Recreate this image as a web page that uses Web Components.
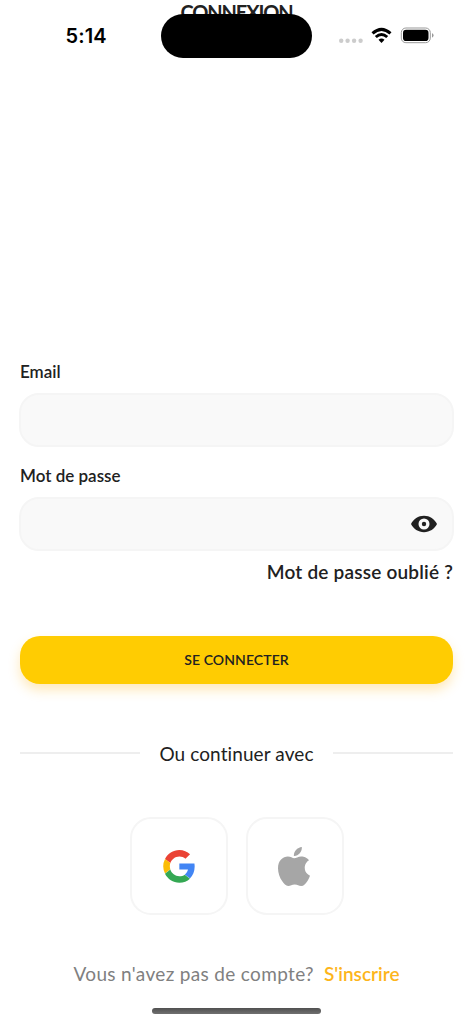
<!DOCTYPE html>
<html lang="fr">
<head>
<meta charset="utf-8">
<title>Connexion</title>
<style>
html, body { margin: 0; background: #fff; height: 1024px; overflow: hidden; }
</style>
</head>
<body>
<login-screen></login-screen>
<script>
const define = (name, html) => customElements.define(name, class extends HTMLElement {
  constructor() {
    super();
    const t = document.createElement('template');
    t.innerHTML = html;
    this.attachShadow({ mode: 'open' }).appendChild(t.content.cloneNode(true));
  }
});

define('status-bar', `
<style>
:host { display: block; position: relative; height: 72px; color: #000; }
.title { text-align: center; font: 700 20px/24px Lato, sans-serif; color: #212121; letter-spacing: -1.15px; }
.bar { position: absolute; inset: 14px 0 auto 0; height: 44px; display: grid; grid-template-columns: 161px 151px 161px; }
.time { font: 600 20px/44px Inter, sans-serif; padding-left: 65.5px; letter-spacing: 0.15px; }
.island { background: #000; border-radius: 22px; }
svg { display: block; }
.icons { padding-left: 26px; }
</style>
<div class="title">CONNEXION</div>
<div class="bar">
  <div class="time">5:14</div>
  <div class="island"></div>
  <div class="icons">
    <svg width="100" height="44" viewBox="0 0 100 44">
      <g fill="#ccc"><circle cx="3.2" cy="26.8" r="2.2"/><circle cx="9.6" cy="26.8" r="2.2"/><circle cx="16.1" cy="26.8" r="2.2"/><circle cx="22.6" cy="26.8" r="2.2"/></g>
      <g fill="none" stroke="#000" stroke-width="3"><path d="M34.5 19.4 Q43.5 11.3 52.5 19.4"/><path d="M37.8 23 Q43.5 17.9 49.2 23"/></g>
      <path d="M40.5 25.7 Q43.5 23.1 46.5 25.7 L43.5 28.9Z"/>
      <rect x="63.3" y="14" width="29" height="14.7" rx="4.6" fill="none" stroke="#999"/>
      <rect x="65" y="15.8" width="25.5" height="11.2" rx="3.1"/>
      <path d="M94 19 Q97.4 21.3 94 23.8Z" fill="#999"/>
    </svg>
  </div>
</div>`);

define('form-field', `
<style>
:host { display: block; }
.label { font: 600 17px/22px Lato, sans-serif; color: #212121; padding-left: 1px; margin-bottom: 10px; }
.box { box-sizing: border-box; height: 54px; border: 2px solid #f5f5f5; border-radius: 20px; background: #f9f9f9; display: flex; align-items: center; justify-content: flex-end; padding-right: 15px; }
</style>
<div class="label"><slot name="label"></slot></div>
<div class="box"><slot></slot></div>`);

define('eye-icon', `
<style>:host { display: block; } svg { display: block; }</style>
<svg width="26" height="18" viewBox="0 0 26 18"><path fill="#212121" fill-rule="evenodd" d="M13 .8C7.3.8 2.4 4.2 0 9c2.4 4.8 7.3 8.2 13 8.2S23.6 13.8 26 9C23.6 4.2 18.7.8 13 .8ZM13 3.5a5.5 5.5 0 1 1 0 11 5.5 5.5 0 0 1 0-11Z"/><circle cx="13" cy="9" r="2.2" fill="#212121"/></svg>`);

define('primary-button', `
<style>
:host { display: flex; height: 48px; border-radius: 20px; background: #ffcc02; color: #212121; align-items: center; justify-content: center; box-shadow: 0 6px 12px rgba(255,181,30,.3); font: 600 14px/20px Lato, sans-serif; letter-spacing: .1px; }
</style><slot></slot>`);

define('text-divider', `
<style>
:host { display: flex; align-items: center; gap: 19px; font: 400 19px/24px Lato, sans-serif; color: #212121; white-space: nowrap; }
i { flex: 1; height: 2px; background: #eee; }
span { width: 155px; text-align: center; letter-spacing: .1px; padding-top: 1px; margin-bottom: -1px; }
</style><i></i><span><slot></slot></span><i></i>`);

define('social-button', `
<style>
:host { box-sizing: border-box; width: 98px; height: 98px; border: 2px solid #f5f5f5; border-radius: 21px; display: flex; align-items: center; justify-content: center; }
</style><slot></slot>`);

define('google-logo', `
<style>:host, svg { display: block; }</style>
<svg width="32" height="33" viewBox="0 0 48 49" preserveAspectRatio="none">
<path fill="#ea4335" d="M24.5 9.5c3.54 0 6.71 1.22 9.21 3.6l6.85-6.85C36.4 2.38 30.97 0 24.5 0 15.1 0 7 5.38 3 13.22l7.98 6.19C12.9 13.72 18.2 9.5 24.5 9.5z"/>
<path fill="#4285f4" d="M47.5 24.55c0-1.57-.15-3.09-.38-4.55H24.5v9.02h12.94c-.58 2.96-2.26 5.48-4.78 7.18l7.73 6c4.51-4.18 7.11-10.36 7.11-17.65z"/>
<path fill="#fbbc05" d="M11 28.59a14.5 14.5 0 0 1 0-9.18l-7.98-6.19a24 24 0 0 0 0 21.56L11 28.59z"/>
<path fill="#34a853" d="M24.5 48.5c6.48 0 11.93-2.13 15.89-5.81l-7.73-6c-2.15 1.45-4.92 2.3-8.16 2.3-6.3 0-11.6-4.22-13.5-9.91L3 35.27C7 43.11 15.1 48.5 24.5 48.5z"/>
</svg>`);

define('apple-logo', `
<style>:host, svg { display: block; } :host { margin-right: 1px; }</style>
<svg width="32" height="39" viewBox="0 0 814 1000" preserveAspectRatio="none"><path fill="#a6a6a6" d="M788.1 340.9c-5.8 4.5-108.2 62.2-108.2 190.5 0 148.4 130.3 200.9 134.2 202.2-.6 3.2-20.7 71.9-68.7 141.9-42.8 61.6-87.5 123.1-155.5 123.1s-85.5-39.5-164-39.5c-76.5 0-103.7 40.8-165.9 40.8s-105.6-57-155.5-127C46.7 790.7 0 663 0 541.8c0-194.4 126.4-297.5 250.8-297.5 66.1 0 121.2 43.4 162.7 43.4 39.5 0 101.1-46 176.3-46 28.5 0 130.9 2.6 198.3 99.2zm-234-181.5c31.1-36.9 53.1-88.1 53.1-139.3 0-7.1-.6-14.3-1.9-20.1-50.6 1.9-110.8 33.7-147.1 75.8-28.5 32.4-55.1 83.6-55.1 135.5 0 7.8 1.3 15.6 1.9 18.1 3.2.6 8.4 1.3 13.6 1.3 45.4 0 102.5-30.4 135.5-71.3z"/></svg>`);

define('login-screen', `
<style>
:host { display: flex; flex-direction: column; width: 473px; height: 1024px; background: #fff; font-family: Lato, sans-serif; }
main { display: flex; flex-direction: column; padding: 289px 19px 0; }
form-field + form-field { margin-top: 18px; }
.forgot { align-self: flex-end; font: 600 19px/24px Lato, sans-serif; color: #212121; margin-top: 9px; padding-right: 1px; white-space: nowrap; letter-spacing: .2px; }
primary-button { margin: 52px 1px 0; }
text-divider { margin: 57px 1px 0; }
.social { display: flex; justify-content: center; gap: 18px; margin-top: 52px; }
.signup { display: flex; justify-content: center; gap: 10px; font: 400 19px/24px Lato, sans-serif; color: #808080; margin-top: 47px; white-space: nowrap; letter-spacing: .34px; }
.signup b { font-weight: 600; color: #fdb51b; letter-spacing: 0; }
.home { width: 169px; height: 6px; border-radius: 3px; background: linear-gradient(#505050, #707070); margin: 22px auto 0; }
</style>
<status-bar></status-bar>
<main>
<form-field><span slot="label">Email</span></form-field>
<form-field><span slot="label">Mot de passe</span><eye-icon></eye-icon></form-field>
<div class="forgot">Mot de passe oublié ?</div>
<primary-button>SE CONNECTER</primary-button>
<text-divider>Ou continuer avec</text-divider>
<div class="social"><social-button><google-logo></google-logo></social-button><social-button><apple-logo></apple-logo></social-button></div>
<div class="signup"><span>Vous n'avez pas de compte?</span><b>S'inscrire</b></div>
</main>
<div class="home"></div>`);
</script>
</body>
</html>
